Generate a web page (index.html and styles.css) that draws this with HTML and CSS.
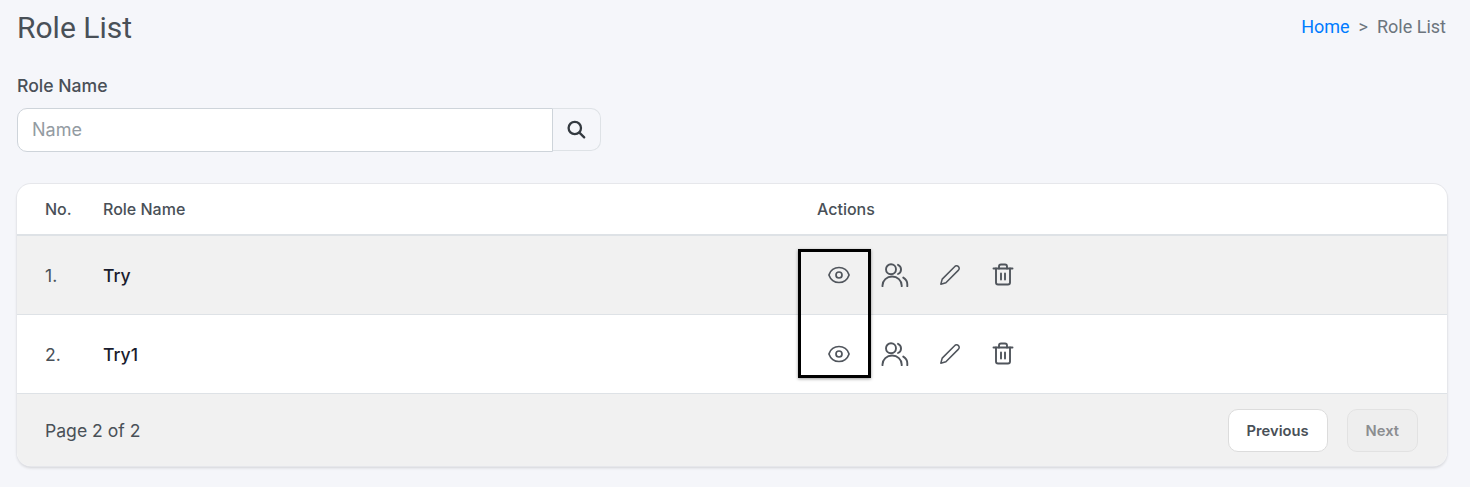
FILE: index.html
```html
<!DOCTYPE html>
<html lang="en">
<head>
    <meta charset="UTF-8">
    <meta name="viewport" content="width=device-width, initial-scale=1.0">
    <title>Role List</title>
    <link rel="stylesheet" href="styles.css">
</head>
<body>
    <header class="page-head">
        <h1>Role List</h1>
        <nav class="breadcrumb">
            <a href="#">Home</a>
            <span class="sep">&gt;</span>
            <span>Role List</span>
        </nav>
    </header>

    <form class="search-form">
        <label for="roleName">Role Name</label>
        <div class="input-group">
            <input type="text" id="roleName" placeholder="Name">
            <button type="button" class="search-btn" aria-label="Search">
                <svg width="20" height="20" viewBox="0 0 20 20" fill="none" stroke="#343a40" stroke-width="2.3" stroke-linecap="round">
                    <circle cx="7.8" cy="8" r="6.2"/>
                    <path d="M12.4 12.6 17.2 17.4"/>
                </svg>
            </button>
        </div>
    </form>

    <div class="card">
        <table class="role-table">
            <thead>
                <tr>
                    <th class="col-no">No.</th>
                    <th class="col-name">Role Name</th>
                    <th class="col-actions">Actions</th>
                </tr>
            </thead>
            <tbody>
                <tr class="shaded">
                    <td class="col-no">1.</td>
                    <td class="col-name">Try</td>
                    <td class="col-actions">
                        <div class="actions">
                            <svg class="icon icon-eye" viewBox="0 0 24 24"><path d="M2.036 12.322a1.012 1.012 0 0 1 0-.639C3.423 7.51 7.36 4.5 12 4.5c4.638 0 8.573 3.007 9.963 7.178.07.207.07.431 0 .639C20.577 16.49 16.64 19.5 12 19.5c-4.638 0-8.573-3.007-9.963-7.178Z"/><path d="M15 12a3 3 0 1 1-6 0 3 3 0 0 1 6 0Z"/></svg>
                            <svg class="icon icon-users" viewBox="0 0 28 24"><circle cx="10" cy="6.3" r="5"/><path d="M1.5 23.2v-.7a9.6 9 0 0 1 19.2 0v.7"/><path d="M17 1.8a5 5 0 0 1 0 9.2"/><path d="M22.3 14.6a8.5 8 0 0 1 4 7v1.6"/></svg>
                            <svg class="icon icon-pencil" viewBox="0 0 24 24"><path d="M17 3a2.85 2.83 0 1 1 4 4L7.5 20.5 2 22l1.5-5.5Z"/></svg>
                            <svg class="icon icon-trash" viewBox="0 0 24 24"><path d="M2.5 6h19"/><path d="M19 6v14a2 2 0 0 1-2 2H7a2 2 0 0 1-2-2V6"/><path d="M8 6V4a2 2 0 0 1 2-2h4a2 2 0 0 1 2 2v2"/><path d="M10 11v6"/><path d="M14 11v6"/></svg>
                        </div>
                    </td>
                </tr>
                <tr>
                    <td class="col-no">2.</td>
                    <td class="col-name">Try1</td>
                    <td class="col-actions">
                        <div class="actions">
                            <svg class="icon icon-eye" viewBox="0 0 24 24"><path d="M2.036 12.322a1.012 1.012 0 0 1 0-.639C3.423 7.51 7.36 4.5 12 4.5c4.638 0 8.573 3.007 9.963 7.178.07.207.07.431 0 .639C20.577 16.49 16.64 19.5 12 19.5c-4.638 0-8.573-3.007-9.963-7.178Z"/><path d="M15 12a3 3 0 1 1-6 0 3 3 0 0 1 6 0Z"/></svg>
                            <svg class="icon icon-users" viewBox="0 0 28 24"><circle cx="10" cy="6.3" r="5"/><path d="M1.5 23.2v-.7a9.6 9 0 0 1 19.2 0v.7"/><path d="M17 1.8a5 5 0 0 1 0 9.2"/><path d="M22.3 14.6a8.5 8 0 0 1 4 7v1.6"/></svg>
                            <svg class="icon icon-pencil" viewBox="0 0 24 24"><path d="M17 3a2.85 2.83 0 1 1 4 4L7.5 20.5 2 22l1.5-5.5Z"/></svg>
                            <svg class="icon icon-trash" viewBox="0 0 24 24"><path d="M2.5 6h19"/><path d="M19 6v14a2 2 0 0 1-2 2H7a2 2 0 0 1-2-2V6"/><path d="M8 6V4a2 2 0 0 1 2-2h4a2 2 0 0 1 2 2v2"/><path d="M10 11v6"/><path d="M14 11v6"/></svg>
                        </div>
                    </td>
                </tr>
            </tbody>
        </table>
        <div class="card-footer">
            <span>Page 2 of 2</span>
            <div class="pager">
                <button type="button" class="page-btn">Previous</button>
                <button type="button" class="page-btn" disabled>Next</button>
            </div>
        </div>
    </div>

    <!-- highlight drawn over the view icons -->
    <div class="highlight"></div>
</body>
</html>
```

FILE: styles.css
```css
* {
    margin: 0;
    padding: 0;
    box-sizing: border-box;
}

html, body {
    height: 100%;
}

body {
    position: relative;
    background: #f5f6fa;
    color: #495057;
    font-family: 'Inter', sans-serif;
    padding: 0 24px 0 17px;
    overflow: hidden;
}

.page-head {
    display: flex;
    justify-content: space-between;
    align-items: center;
    height: 55px;
}

h1 {
    font-family: 'Roboto', sans-serif;
    font-size: 30px;
    font-weight: 400;
    color: #495057;
}

.breadcrumb {
    font-family: 'Roboto', sans-serif;
    font-size: 18px;
    color: #6c757d;
    display: flex;
    gap: 9px;
    margin-top: -3px;
}

.breadcrumb a {
    color: #007bff;
    text-decoration: none;
}

.search-form {
    margin-top: 20px;
    margin-bottom: 32px;
}

label {
    display: block;
    font-size: 17.6px;
    font-weight: 500;
    line-height: 22px;
    margin-bottom: 11px;
}

.input-group {
    display: flex;
    width: 584px;
    align-items: flex-start;
}

.input-group input {
    width: 536px;
    height: 44px;
    padding: 0 14px 2px;
    border: 1px solid #ced4da;
    border-radius: 10px 0 0 10px;
    background: #fff;
    font-family: 'Inter', sans-serif;
    font-size: 18px;
    color: #495057;
}

.input-group input::placeholder {
    color: #939ba2;
}

.search-btn {
    width: 48px;
    height: 43px;
    display: flex;
    align-items: center;
    justify-content: center;
    background: #f5f6fa;
    border: 1px solid #dee2e6;
    border-left: none;
    border-radius: 0 10px 10px 0;
}

.card {
    width: 1430px;
    height: 282px;
    background: #fff;
    border-radius: 14px;
    overflow: hidden;
    box-shadow: 0 0 0 1px #e6e7eb, 0 2px 3px rgba(0, 0, 0, 0.14);
}

.role-table {
    width: 100%;
    border-collapse: collapse;
    table-layout: fixed;
}

.role-table th {
    height: 51px;
    font-size: 16px;
    font-weight: 500;
    text-align: left;
    border-bottom: 2px solid #dee2e6;
}

.role-table td {
    height: 79px;
    padding-top: 1px;
    font-size: 17.6px;
    border-bottom: 1px solid #dee2e6;
}

.col-no {
    width: 86px;
    padding-left: 28px;
}

td.col-name {
    color: #1a1d2e;
    font-weight: 500;
}

.col-name {
    width: 714px;
}

.shaded {
    background: #f1f1f1;
}

.actions {
    display: flex;
    align-items: center;
    margin-left: 10px;
    margin-top: -1px;
}

.icon {
    fill: none;
    stroke: #50555c;
    stroke-width: 1.7;
    stroke-linecap: round;
    stroke-linejoin: round;
    flex: none;
}

.icon-eye {
    width: 24px;
    height: 24px;
}

.icon-users {
    width: 28px;
    height: 24px;
    margin-left: 30px;
    stroke-width: 1.9;
}

.icon-pencil {
    width: 22px;
    height: 22px;
    margin-left: 30px;
}

.icon-trash {
    width: 24px;
    height: 25px;
    margin-left: 30px;
    stroke-width: 1.9;
}

.card-footer {
    display: flex;
    justify-content: space-between;
    align-items: center;
    height: 73px;
    padding: 0 29px 0 28px;
    background: #f1f1f1;
    font-size: 17.6px;
    font-weight: 400;
}

.pager {
    display: flex;
    gap: 19px;
}

.page-btn {
    height: 43px;
    padding: 2px 18px 0;
    border: 1px solid #dcdcdc;
    border-radius: 10px;
    background: #fff;
    color: #495057;
    font-family: 'Inter', sans-serif;
    font-size: 14.72px;
    font-weight: 600;
}

.page-btn:disabled {
    background: #eeeeee;
    color: #8b8d90;
    border-color: #e2e2e2;
}

.highlight {
    position: absolute;
    left: 798px;
    top: 249px;
    width: 73px;
    height: 129px;
    border: 3px solid #000;
    box-shadow: 0 1px 3px rgba(0, 0, 0, 0.4);
}
```
